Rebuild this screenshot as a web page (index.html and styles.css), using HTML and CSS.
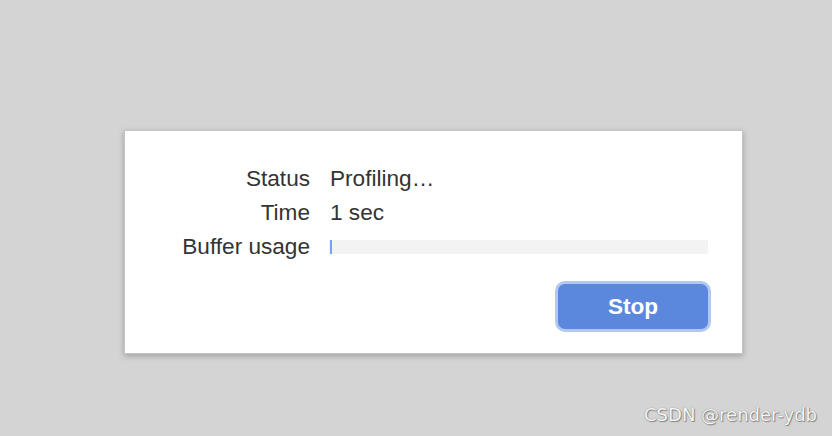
FILE: index.html
```html
<!DOCTYPE html>
<html>
<head>
<meta charset="utf-8">
<link rel="stylesheet" href="styles.css">
</head>
<body>
<div class="dialog">
  <div class="grid">
    <div class="label">Status</div>
    <div class="value">Profiling…</div>
    <div class="label">Time</div>
    <div class="value">1 sec</div>
    <div class="label">Buffer usage</div>
    <div class="value"><div class="bar"><div class="fill"></div></div></div>
  </div>
  <div class="actions">
    <button class="stop">Stop</button>
  </div>
</div>
<div class="watermark">CSDN @render-ydb</div>
</body>
</html>
```
FILE: styles.css
```css
html, body {
  margin: 0;
  padding: 0;
}
body {
  background: #d4d4d4;
  width: 832px;
  height: 436px;
  overflow: hidden;
  position: relative;
  font-family: "Liberation Sans", Arial, sans-serif;
  padding-top: 130px;
  padding-left: 124px;
  box-sizing: border-box;
}
.dialog {
  width: 619px;
  height: 224px;
  box-sizing: border-box;
  background: #fff;
  border: 1px solid #c4c4c4;
  box-shadow: 0 2px 6px rgba(0,0,0,0.25);
  padding: 31px 34px 0 0;
}
.grid {
  display: grid;
  grid-template-columns: 185px 1fr;
  column-gap: 19px;
  grid-auto-rows: 34px;
  align-items: center;
  color: #333;
  font-size: 22.6px;
}
.label {
  text-align: right;
}
.value {
  padding-left: 1px;
}
.bar {
  height: 14px;
  background: #f3f3f3;
  margin-left: -1px;
  position: relative;
}
.fill {
  width: 2px;
  height: 14px;
  margin-left: 1px;
  background: #7aa2f0;
}
.actions {
  display: flex;
  justify-content: flex-end;
  margin-top: 20px;
}
.stop {
  width: 150px;
  height: 45px;
  border: none;
  border-radius: 7px;
  background: #5b88dc;
  box-shadow: 0 0 0 3px #b3c8ef;
  color: #fff;
  font-family: "Liberation Sans", Arial, sans-serif;
  font-weight: bold;
  font-size: 22.6px;
  padding: 0;
}
.watermark {
  position: absolute;
  right: 15px;
  top: 404px;
  font-family: "DejaVu Sans", sans-serif;
  font-size: 18px;
  color: #f6f6f6;
  text-shadow: 0 0 1px #666, 1px 1px 1px #888;
}
```
